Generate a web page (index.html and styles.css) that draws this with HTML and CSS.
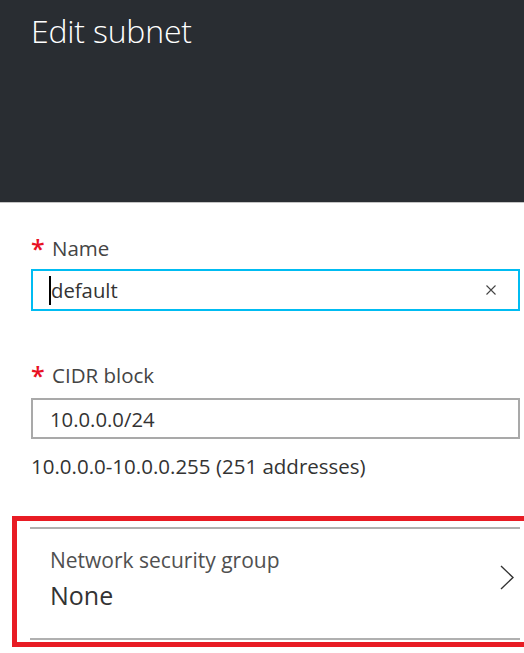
FILE: index.html
```html
<!DOCTYPE html>
<html>
<head>
<meta charset="utf-8">
<link rel="stylesheet" href="styles.css">
</head>
<body>
<div class="blade">
  <header class="blade-header">
    <h1 class="title">Edit subnet</h1>
  </header>
  <main class="blade-content">
    <div class="field field-name">
      <label class="label"><span class="req">*</span>Name</label>
      <div class="input input-focus">
        <span class="caret"></span><span class="value">default</span>
        <svg class="clear" width="10" height="10" viewBox="0 0 10 10"><path d="M0.5 0.5L9.5 9.5M9.5 0.5L0.5 9.5" stroke="#444" stroke-width="1.1" fill="none"/></svg>
      </div>
    </div>
    <div class="field field-cidr">
      <label class="label"><span class="req">*</span>CIDR block</label>
      <div class="input">
        <span class="value">10.0.0.0/24</span>
      </div>
      <div class="hint">10.0.0.0-10.0.0.255 (251 addresses)</div>
    </div>
    <div class="highlight">
      <div class="nsg-row">
        <div class="nsg-text">
          <div class="nsg-label">Network security group</div>
          <div class="nsg-value">None</div>
        </div>
        <svg class="chevron" width="14" height="25" viewBox="0 0 14 25"><path d="M1 1L13 12.5L1 24" stroke="#333" stroke-width="1.4" fill="none"/></svg>
      </div>
    </div>
  </main>
</div>
</body>
</html>
```
FILE: styles.css
```css
html, body {
  margin: 0;
  padding: 0;
  background: #ffffff;
}
body {
  font-family: "Open Sans", "Noto Sans", sans-serif;
  width: 524px;
  height: 653px;
  overflow: hidden;
}
.blade-header {
  background: #292d32;
  height: 202px;
  border-bottom: 1px solid #c4c4c4;
}
.title {
  margin: 0;
  padding: 9px 0 0 31px;
  font-weight: 300;
  font-size: 32px;
  line-height: 44px;
  color: #ffffff;
  letter-spacing: -0.2px;
}
.blade-content {
  padding: 0 4px 0 31px;
}
.field-name {
  padding-top: 31px;
}
.field-cidr {
  padding-top: 50px;
}
.label {
  display: flex;
  align-items: flex-start;
  font-size: 20.5px;
  line-height: 28px;
  color: #444;
  height: 35px;
}
.field-cidr .label {
  height: 37px;
}
.req {
  color: #e81123;
  font-size: 25px;
  line-height: 28px;
  width: 21px;
  font-weight: 600;
}
.input {
  height: 37px;
  border: 2px solid #a9a9a9;
  display: flex;
  align-items: center;
  padding: 0 0 0 17px;
  font-size: 20.3px;
  color: #333;
}
.input-focus {
  height: 38px;
  border: 2px solid #00bcf2;
}
.caret {
  width: 2px;
  height: 29px;
  background: #000;
  margin-left: -1px;
  margin-right: 0;
}
.value {
  flex: 1;
}
.clear {
  margin-right: 22px;
}
.hint {
  margin-top: 13px;
  font-size: 20.5px;
  line-height: 28px;
  color: #333;
}
.highlight {
  margin: 36px 0 0 -19px;
  border: 5px solid #e81c24;
  border-right: none;
  padding: 6px 4px 2px 13px;
  height: 131px;
  box-sizing: border-box;
  width: 512px;
}
.nsg-row {
  border-top: 2px solid #b0b0b0;
  border-bottom: 2px solid #b0b0b0;
  height: 113px;
  box-sizing: border-box;
  display: flex;
  align-items: flex-start;
  padding: 18px 6px 0 20px;
}
.nsg-text {
  flex: 1;
}
.nsg-label {
  font-size: 21px;
  line-height: 26px;
  color: #505050;
}
.nsg-value {
  margin-top: 5px;
  font-size: 25px;
  line-height: 34px;
  color: #333;
}
.chevron {
  display: block;
  margin-top: 18px;
}
```
